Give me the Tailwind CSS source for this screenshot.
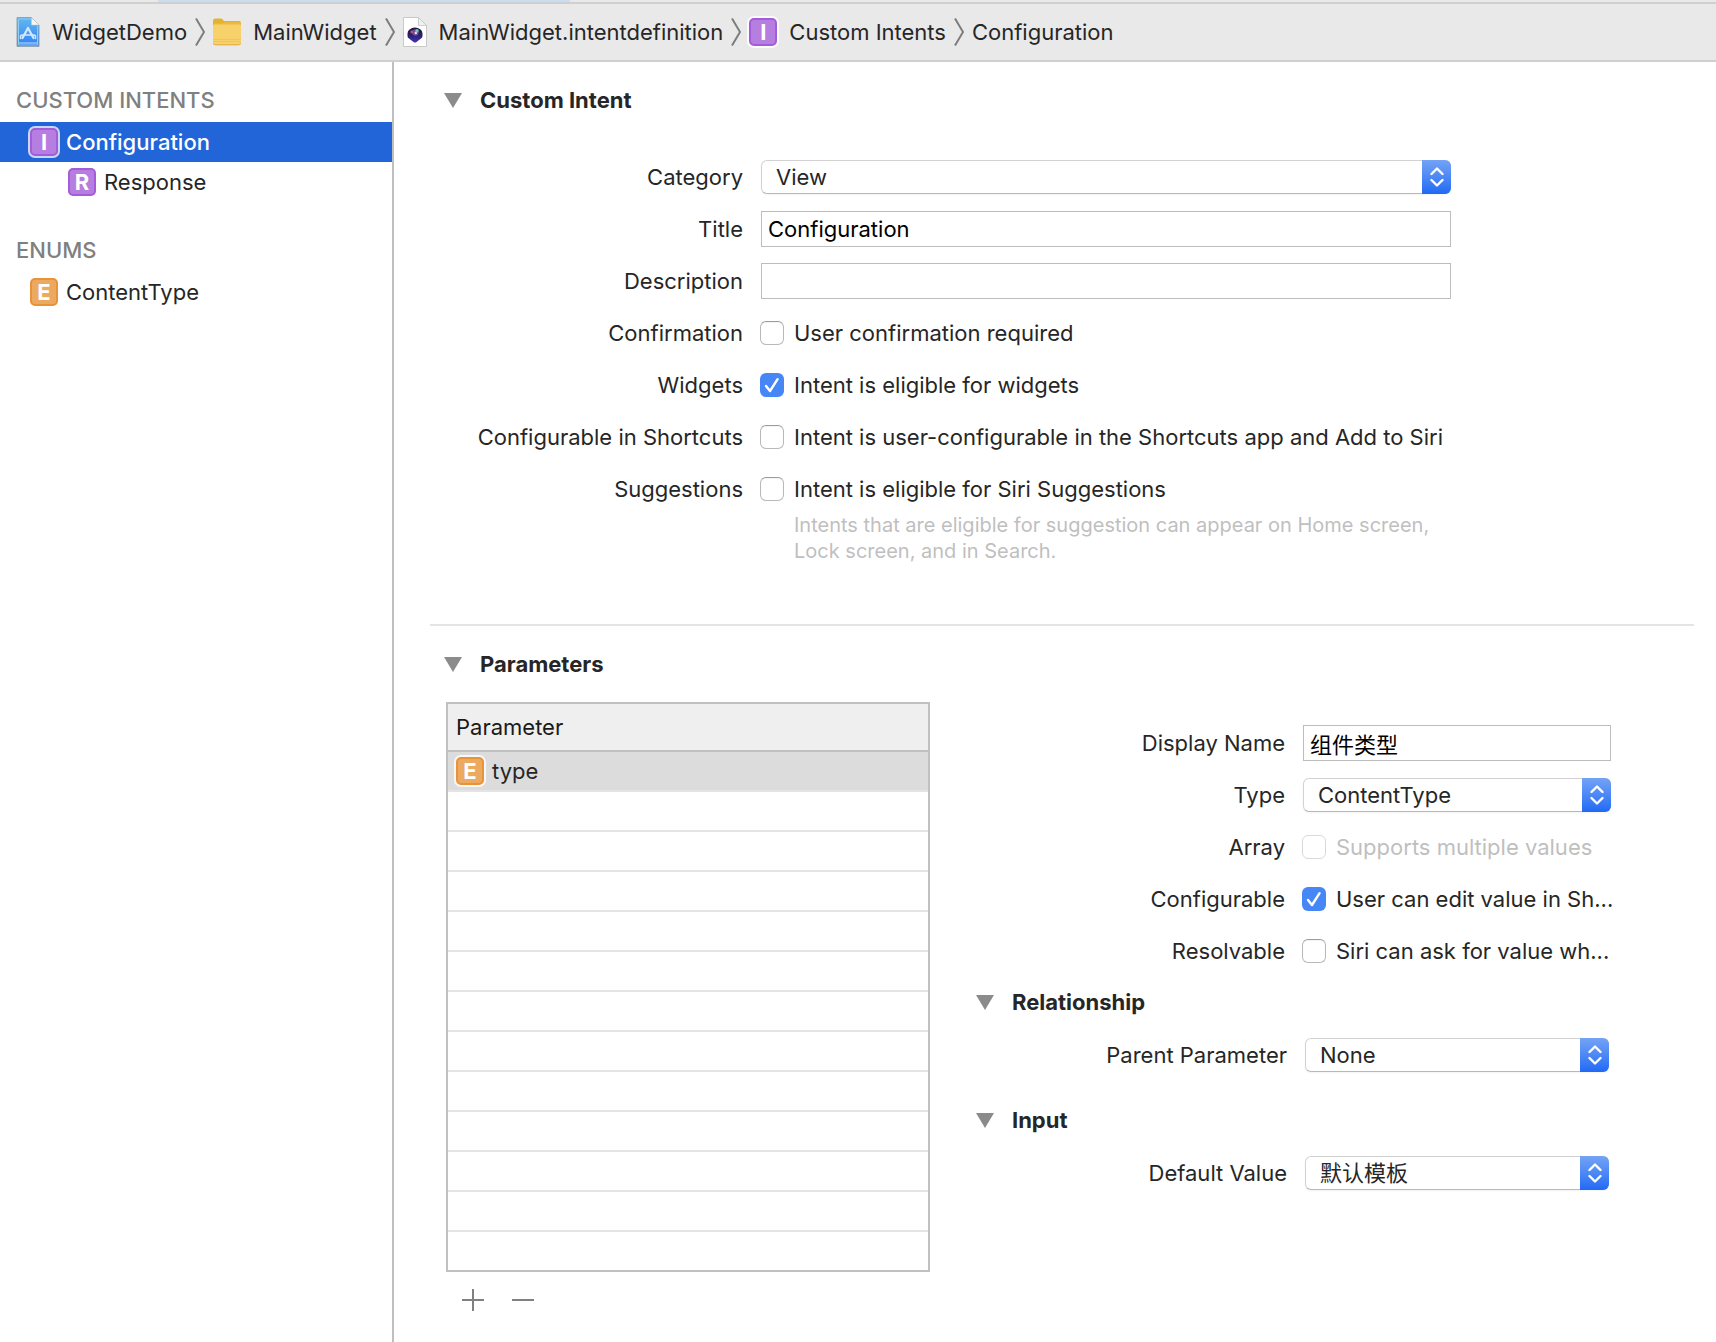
<!DOCTYPE html>
<html lang="en">
<head>
<meta charset="utf-8">
<meta name="viewport" content="width=device-width, initial-scale=1">
<title>MainWidget.intentdefinition</title>
<script src="https://cdn.jsdelivr.net/npm/@tailwindcss/browser@4"></script>
</head>
<body class="flex min-h-screen flex-col bg-white font-['Inter','Noto_Sans_CJK_SC',sans-serif] text-[22px] leading-7 text-[#262626]">

<!-- Shared symbols -->
<svg class="hidden" aria-hidden="true">
  <symbol id="crumb" viewBox="0 0 10 28"><path d="M1 0.5 L9 14 L1 27.5" fill="none" stroke="#7d7d7d" stroke-width="2"/></symbol>
  <symbol id="triangle" viewBox="0 0 18 15"><path d="M0 0H18L9 15Z" fill="#8b8b8b"/></symbol>
  <symbol id="updown" viewBox="0 0 14 20"><path d="M1.5 7 L7 1.5 L12.5 7 M1.5 13 L7 18.5 L12.5 13" fill="none" stroke="#fff" stroke-width="2.4" stroke-linecap="round" stroke-linejoin="round"/></symbol>
  <symbol id="tick" viewBox="0 0 24 24"><path d="M6 13 L10 18 L17.6 6.2" fill="none" stroke="#fff" stroke-width="2.4" stroke-linecap="round" stroke-linejoin="round"/></symbol>
</svg>

<!-- Tab bar edge -->
<div class="h-1 border-b-2 border-[#cfcfcf] bg-[#e9e9e9] pl-[158px]"><div class="h-full w-[412px] bg-[#cadcf3]"></div></div>

<!-- Jump bar -->
<nav aria-label="Breadcrumb" class="flex h-[58px] items-center gap-2 border-b-2 border-[#cfcfcf] bg-[#e9e9e9] pl-4 whitespace-nowrap">
  <a href="#" class="flex items-center gap-3">
    <svg class="h-[30px] w-6" viewBox="0 0 24 30">
      <defs><linearGradient id="proj" x1="0" y1="0" x2="0" y2="1"><stop offset="0" stop-color="#62b9ee"/><stop offset="1" stop-color="#3080f5"/></linearGradient></defs>
      <path d="M1 0.5H15.5L23 8V29.5H1Z" fill="url(#proj)" stroke="#93a3b0" stroke-width="1"/>
      <path d="M2.5 2H15M21.500 9V28H2.500V2" fill="none" stroke="#8ccbf8" stroke-width="1"/>
      <path d="M15.500 .8V8H23Z" fill="#f6f6f6" stroke="#c5cdd3" stroke-width=".6"/>
      <path d="M12 11 L6.500 21 M12 11 L17.500 21" fill="none" stroke="#cfeaff" stroke-width="2.200" stroke-linecap="round"/>
      <path d="M4.500 21.500Q4 18 6 18H18Q20 18 19.500 21.500" fill="none" stroke="#cfeaff" stroke-width="1.500" stroke-linecap="round"/>
      <path d="M3 26H21" stroke="#bfe2ff" stroke-width="1"/>
    </svg>
    <span>WidgetDemo</span>
  </a>
  <svg class="h-7 w-[10px]"><use href="#crumb"/></svg>
  <a href="#" class="flex items-center gap-3">
    <svg class="size-7" viewBox="0 0 28 28">
      <path d="M0 3Q0 .5 2.500 .5H7.500Q9 .5 10 1.800L11 3H26Q28 3 28 5V9H0Z" fill="#e2b233"/>
      <path d="M0 7.500Q0 5.500 2 5.500H8.500Q9.500 5.500 10.500 4.800L11 4.500H27Q28 4.500 28 6V25Q28 27 26 27H2Q0 27 0 25Z" fill="#e9bb45"/>
      <path d="M0 8Q0 6.500 1.500 6.500H26.500Q28 6.500 28 8V25Q28 27 26 27H2Q0 27 0 25Z" fill="#f8d16a"/>
      <path d="M0 21.500H28M0 23.500H28" stroke="#efc157" stroke-width=".8"/>
      <path d="M.5 25.500Q1 26.800 2.500 26.800H25.500Q27 26.800 27.500 25.500" fill="none" stroke="#e0a93c" stroke-width="1"/>
    </svg>
    <span>MainWidget</span>
  </a>
  <svg class="h-7 w-[10px]"><use href="#crumb"/></svg>
  <a href="#" class="flex items-center gap-3">
    <svg class="h-[30px] w-6" viewBox="0 0 24 30">
      <defs><linearGradient id="gem" x1="0" y1="0" x2="0" y2="1"><stop offset="0" stop-color="#1d1d3a"/><stop offset=".5" stop-color="#2b1f63"/><stop offset="1" stop-color="#4630c8"/></linearGradient></defs>
      <path d="M.5.500H15.500L23.500 8.500V29.500H.5Z" fill="#fff" stroke="#c9c9c9" stroke-width="1"/>
      <path d="M15.500 .5V8.500H23.500Z" fill="#f1f1f1" stroke="#c4c4c4" stroke-width=".8"/>
      <path d="M12 10.500Q15 10.500 17.500 12.500Q19.500 14 19.500 16.500V19Q19.500 20.500 18 21.500L13.500 25Q12 26 10.500 25L6 21.500Q4.500 20.500 4.500 19V16.500Q4.500 14 6.500 12.500Q9 10.500 12 10.500Z" fill="url(#gem)"/>
      <circle cx="12.500" cy="15.500" r="3.200" fill="#6a4f95"/>
      <circle cx="14" cy="13.800" r="1.700" fill="#6fc3b8"/>
      <circle cx="8.800" cy="15" r="1.400" fill="#c14f86"/>
      <circle cx="12.800" cy="16" r="1.200" fill="#e3dcf5"/>
    </svg>
    <span>MainWidget.intentdefinition</span>
  </a>
  <svg class="h-7 w-[10px]"><use href="#crumb"/></svg>
  <a href="#" class="flex items-center gap-3">
    <span class="flex size-7 items-center justify-center rounded-[5px] border-2 border-[#a55cd8] bg-[#b67ee0] leading-none font-bold text-white ring-2 ring-white/80">I</span>
    <span>Custom Intents</span>
  </a>
  <svg class="h-7 w-[10px]"><use href="#crumb"/></svg>
  <a href="#">Configuration</a>
</nav>

<div class="flex flex-1">
  <!-- Intent list -->
  <aside class="w-[394px] shrink-0 border-r-2 border-[#bfbfbf] pt-4">
    <h2 class="flex h-11 items-center pl-4 font-medium text-[#808080]">CUSTOM INTENTS</h2>
    <a href="#" aria-current="true" class="flex h-10 items-center gap-2 bg-[#2165d9] pl-[30px] font-medium text-white">
      <span class="flex size-7 items-center justify-center rounded-[5px] border-2 border-[#a55cd8] bg-[#b67ee0] leading-none font-bold text-white ring-2 ring-white/75">I</span>Configuration
    </a>
    <a href="#" class="flex h-10 items-center gap-2 pl-[68px]">
      <span class="flex size-7 items-center justify-center rounded-[5px] border-2 border-[#a55cd8] bg-[#b67ee0] leading-none font-bold text-white">R</span>Response
    </a>
    <h2 class="mt-[26px] flex h-11 items-center pl-4 font-medium text-[#808080]">ENUMS</h2>
    <a href="#" class="flex h-10 items-center gap-2 pl-[30px]">
      <span class="flex size-7 items-center justify-center rounded-[5px] border-2 border-[#e8923a] bg-[#eca960] leading-none font-bold text-white">E</span>ContentType
    </a>
  </aside>

  <main class="min-w-0 flex-1 pr-[22px] pl-9">
    <!-- Custom Intent -->
    <section class="border-b-2 border-[#e4e4e4] pt-6 pb-[57px]">
      <h2 class="pl-[14px]">
        <button type="button" aria-expanded="true" class="flex items-center gap-[18px] font-bold"><svg class="h-[15px] w-[18px]"><use href="#triangle"/></svg>Custom Intent</button>
      </h2>
      <form class="mt-[37px] grid max-w-[1021px] auto-rows-[52px] grid-cols-[313px_1fr] items-center gap-x-[18px]">
        <label for="category" class="text-right">Category</label>
        <div class="relative">
          <select id="category" class="block h-[34px] w-full appearance-none rounded-md border border-[#d2d2d2] border-b-[#b8b8b8] bg-white pr-9 pl-[14px] shadow-xs"><option>View</option></select>
          <span class="pointer-events-none absolute inset-y-0 right-0 flex w-[29px] items-center justify-center rounded-r-md bg-linear-to-b from-[#74a3f5] to-[#2069f5]"><svg class="h-5 w-[14px]"><use href="#updown"/></svg></span>
        </div>
        <label for="title" class="text-right">Title</label>
        <input id="title" type="text" value="Configuration" class="h-9 w-full border border-[#bdbdbd] bg-white px-1.5 text-black">
        <label for="description" class="text-right">Description</label>
        <input id="description" type="text" class="h-9 w-full border border-[#bdbdbd] bg-white px-1.5 text-black">

        <label for="confirmation" class="text-right">Confirmation</label>
        <div class="-ml-px flex items-center gap-[10px]">
          <input id="confirmation" type="checkbox" class="size-6 shrink-0 appearance-none rounded-md border border-[#b9b9b9] border-t-[#9c9c9c] bg-white inset-shadow-xs">
          <label for="confirmation">User confirmation required</label>
        </div>

        <label for="widgets" class="text-right">Widgets</label>
        <div class="-ml-px flex items-center gap-[10px]">
          <span class="grid shrink-0"><input id="widgets" type="checkbox" checked class="col-start-1 row-start-1 size-6 appearance-none rounded-md bg-[#4787f5]"><svg class="pointer-events-none col-start-1 row-start-1 size-6"><use href="#tick"/></svg></span>
          <label for="widgets">Intent is eligible for widgets</label>
        </div>

        <label for="shortcuts" class="text-right whitespace-nowrap">Configurable in Shortcuts</label>
        <div class="-ml-px flex items-center gap-[10px]">
          <input id="shortcuts" type="checkbox" class="size-6 shrink-0 appearance-none rounded-md border border-[#b9b9b9] border-t-[#9c9c9c] bg-white inset-shadow-xs">
          <label for="shortcuts" class="whitespace-nowrap">Intent is user-configurable in the Shortcuts app and Add to Siri</label>
        </div>

        <label for="suggestions" class="text-right">Suggestions</label>
        <div class="-ml-px flex items-center gap-[10px]">
          <input id="suggestions" type="checkbox" aria-describedby="suggestions-hint" class="size-6 shrink-0 appearance-none rounded-md border border-[#b9b9b9] border-t-[#9c9c9c] bg-white inset-shadow-xs">
          <label for="suggestions">Intent is eligible for Siri Suggestions</label>
        </div>

        <p id="suggestions-hint" class="col-start-2 -mt-[3px] self-start pl-[33px] text-xl leading-[26px] whitespace-nowrap text-[#bfbfbf]">Intents that are eligible for suggestion can appear on Home screen,<br>Lock screen, and in Search.</p>
      </form>
    </section>

    <!-- Parameters -->
    <section class="pt-6">
      <h2 class="pl-[14px]">
        <button type="button" aria-expanded="true" class="flex items-center gap-[18px] font-bold"><svg class="h-[15px] w-[18px]"><use href="#triangle"/></svg>Parameters</button>
      </h2>
      <div class="mt-6 flex items-start gap-[46px] pl-4">
        <div class="w-[484px] shrink-0">
          <table class="w-full border-separate border-spacing-0 border-2 border-[#c0c0c0]">
            <thead><tr><th scope="col" class="h-12 border-b-2 border-[#c0c0c0] bg-[#efefef] pl-2 text-left font-normal text-[#1a1a1a]">Parameter</th></tr></thead>
            <tbody>
              <tr><td class="h-10 border-b-2 border-[#e4e4e4] bg-[#dcdcdc] pl-2"><div class="flex items-center gap-2"><span class="flex size-7 items-center justify-center rounded-[5px] border-2 border-[#e8923a] bg-[#eca960] leading-none font-bold text-white ring-2 ring-white/80">E</span>type</div></td></tr>
              <tr><td class="h-10 border-b-2 border-[#e4e4e4]"></td></tr>
              <tr><td class="h-10 border-b-2 border-[#e4e4e4]"></td></tr>
              <tr><td class="h-10 border-b-2 border-[#e4e4e4]"></td></tr>
              <tr><td class="h-10 border-b-2 border-[#e4e4e4]"></td></tr>
              <tr><td class="h-10 border-b-2 border-[#e4e4e4]"></td></tr>
              <tr><td class="h-10 border-b-2 border-[#e4e4e4]"></td></tr>
              <tr><td class="h-10 border-b-2 border-[#e4e4e4]"></td></tr>
              <tr><td class="h-10 border-b-2 border-[#e4e4e4]"></td></tr>
              <tr><td class="h-10 border-b-2 border-[#e4e4e4]"></td></tr>
              <tr><td class="h-10 border-b-2 border-[#e4e4e4]"></td></tr>
              <tr><td class="h-10 border-b-2 border-[#e4e4e4]"></td></tr>
              <tr><td class="h-[38px]"></td></tr>
            </tbody>
          </table>
          <div class="flex gap-7 pt-[17px] pl-4">
            <button type="button" aria-label="Add parameter"><svg class="size-[22px]" viewBox="0 0 22 22"><path d="M0 11H22M11 0V22" stroke="#808080" stroke-width="2"/></svg></button>
            <button type="button" aria-label="Remove parameter"><svg class="size-[22px]" viewBox="0 0 22 22"><path d="M0 11H22" stroke="#808080" stroke-width="2"/></svg></button>
          </div>
        </div>

        <form class="max-w-[635px] min-w-0 flex-1 pt-[15px]">
          <div class="grid auto-rows-[52px] grid-cols-[309px_minmax(0,1fr)] items-center gap-x-[18px]">
            <label for="display-name" class="text-right">Display Name</label>
            <input id="display-name" type="text" value="组件类型" class="h-9 w-full border border-[#bdbdbd] bg-white px-1.5 text-black">

            <label for="type" class="text-right">Type</label>
            <div class="relative">
              <select id="type" class="block h-[34px] w-full appearance-none rounded-md border border-[#d2d2d2] border-b-[#b8b8b8] bg-white pr-9 pl-[14px] shadow-xs"><option>ContentType</option></select>
              <span class="pointer-events-none absolute inset-y-0 right-0 flex w-[29px] items-center justify-center rounded-r-md bg-linear-to-b from-[#74a3f5] to-[#2069f5]"><svg class="h-5 w-[14px]"><use href="#updown"/></svg></span>
            </div>

            <label for="array" class="text-right">Array</label>
            <div class="-ml-px flex items-center gap-[10px]">
              <input id="array" type="checkbox" disabled class="size-6 shrink-0 appearance-none rounded-md border border-[#d9d9d9] bg-white">
              <label for="array" class="whitespace-nowrap text-[#bfbfbf]">Supports multiple values</label>
            </div>

            <label for="configurable" class="text-right">Configurable</label>
            <div class="-ml-px flex items-center gap-[10px]">
              <span class="grid shrink-0"><input id="configurable" type="checkbox" checked class="col-start-1 row-start-1 size-6 appearance-none rounded-md bg-[#4787f5]"><svg class="pointer-events-none col-start-1 row-start-1 size-6"><use href="#tick"/></svg></span>
              <label for="configurable" class="whitespace-nowrap">User can edit value in Sh...</label>
            </div>

            <label for="resolvable" class="text-right">Resolvable</label>
            <div class="-ml-px flex items-center gap-[10px]">
              <input id="resolvable" type="checkbox" class="size-6 shrink-0 appearance-none rounded-md border border-[#b9b9b9] border-t-[#9c9c9c] bg-white inset-shadow-xs">
              <label for="resolvable" class="whitespace-nowrap">Siri can ask for value wh...</label>
            </div>
          </div>

          <h3 class="mt-[11px]">
            <button type="button" aria-expanded="true" class="flex items-center gap-[18px] font-bold"><svg class="h-[15px] w-[18px]"><use href="#triangle"/></svg>Relationship</button>
          </h3>
          <div class="mt-[13px] grid auto-rows-[52px] grid-cols-[311px_minmax(0,1fr)] items-center gap-x-[18px] pr-[2px]">
            <label for="parent" class="text-right">Parent Parameter</label>
            <div class="relative">
              <select id="parent" class="block h-[34px] w-full appearance-none rounded-md border border-[#d2d2d2] border-b-[#b8b8b8] bg-white pr-9 pl-[14px] shadow-xs"><option>None</option></select>
              <span class="pointer-events-none absolute inset-y-0 right-0 flex w-[29px] items-center justify-center rounded-r-md bg-linear-to-b from-[#74a3f5] to-[#2069f5]"><svg class="h-5 w-[14px]"><use href="#updown"/></svg></span>
            </div>
          </div>

          <h3 class="mt-[25px]">
            <button type="button" aria-expanded="true" class="flex items-center gap-[18px] font-bold"><svg class="h-[15px] w-[18px]"><use href="#triangle"/></svg>Input</button>
          </h3>
          <div class="mt-[13px] grid auto-rows-[52px] grid-cols-[311px_minmax(0,1fr)] items-center gap-x-[18px] pr-[2px]">
            <label for="default-value" class="text-right">Default Value</label>
            <div class="relative">
              <select id="default-value" class="block h-[34px] w-full appearance-none rounded-md border border-[#d2d2d2] border-b-[#b8b8b8] bg-white pr-9 pl-[14px] shadow-xs"><option>默认模板</option></select>
              <span class="pointer-events-none absolute inset-y-0 right-0 flex w-[29px] items-center justify-center rounded-r-md bg-linear-to-b from-[#74a3f5] to-[#2069f5]"><svg class="h-5 w-[14px]"><use href="#updown"/></svg></span>
            </div>
          </div>
        </form>
      </div>
    </section>
  </main>
</div>
</body>
</html>
